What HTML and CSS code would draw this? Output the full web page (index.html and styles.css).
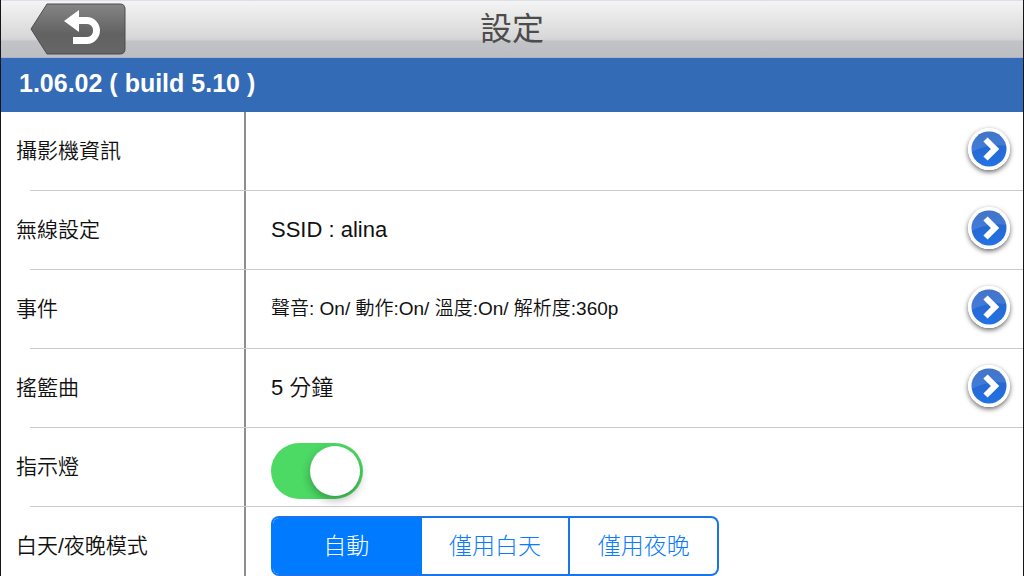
FILE: index.html
```
<!DOCTYPE html>
<html lang="zh-Hant">
<head>
  <meta charset="UTF-8" />
  <meta name="viewport" content="width=device-width, initial-scale=1.0" />
  <title>設定</title>
  <link rel="stylesheet" href="styles.css">
</head>
<body>
  <!-- shared arrow icon -->
  <svg class="sprite" aria-hidden="true">
    <defs>
      <linearGradient id="arrowFill" x1="0" y1="0" x2="0" y2="1">
        <stop offset="0" stop-color="#2a62c0" />
        <stop offset="1" stop-color="#2272e6" />
      </linearGradient>
      <symbol id="icon-arrow" viewBox="0 0 42 42">
        <circle cx="21" cy="21" r="21" fill="#fff" />
        <circle cx="21" cy="21" r="17.5" fill="url(#arrowFill)" />
        <path d="M4 24a17 17 0 0 1 34-6C28 16 14 18 4 24z" fill="#fff" opacity="0.12" />
        <path d="M17.5 11.500l9.500 9.500-9.500 9.500" fill="none" stroke="#fff" stroke-width="6" />
      </symbol>
    </defs>
  </svg>

  <header class="top-bar">
    <button type="button" class="back-btn" aria-label="返回">
      <svg width="96" height="52" viewBox="0 0 96 52">
        <defs>
          <linearGradient id="backFill" x1="0" y1="0" x2="0" y2="1">
            <stop offset="0" stop-color="#858585" />
            <stop offset="0.6" stop-color="#626262" />
            <stop offset="1" stop-color="#666" />
          </linearGradient>
        </defs>
        <path d="M17 1h73q5 0 5 5v40q0 5-5 5H17L1 26z" fill="url(#backFill)" stroke="#4d4d4d" stroke-linejoin="round" />
        <path d="M34 18L49 7v7h8c7 0 13 6 13 13.500s-6 13.500-13 13.500H43v-7h14c4 0 6-3 6-6.500s-2-6.500-6-6.500h-8v8z" fill="#fff" />
      </svg>
    </button>
    <h1>設定</h1>
  </header>

  <h2 class="version">1.06.02 ( build 5.10 )</h2>

  <main class="settings">
    <div class="row">
      <div class="name" id="cameraName">攝影機資訊</div>
      <div class="value">
        <button type="button" class="arrow-btn" aria-labelledby="cameraName"><svg><use href="#icon-arrow" /></svg></button>
      </div>
    </div>
    <hr>
    <div class="row">
      <div class="name" id="wifiName">無線設定</div>
      <div class="value">
        <span>SSID : alina</span>
        <button type="button" class="arrow-btn" aria-labelledby="wifiName"><svg><use href="#icon-arrow" /></svg></button>
      </div>
    </div>
    <hr>
    <div class="row">
      <div class="name" id="eventName">事件</div>
      <div class="value">
        <span class="small">聲音: On/ 動作:On/ 溫度:On/ 解析度:360p</span>
        <button type="button" class="arrow-btn" aria-labelledby="eventName"><svg><use href="#icon-arrow" /></svg></button>
      </div>
    </div>
    <hr>
    <div class="row">
      <div class="name" id="lullabyName">搖籃曲</div>
      <div class="value">
        <span>5 分鐘</span>
        <button type="button" class="arrow-btn" aria-labelledby="lullabyName"><svg><use href="#icon-arrow" /></svg></button>
      </div>
    </div>
    <hr>
    <div class="row">
      <label class="name" for="led">指示燈</label>
      <div class="value switch-cell">
        <input type="checkbox" class="switch" id="led" checked />
      </div>
    </div>
    <hr>
    <div class="row">
      <div class="name" id="modeName">白天/夜晚模式</div>
      <div class="value">
        <div class="segments" role="radiogroup" aria-labelledby="modeName">
          <label><input type="radio" name="mode" checked />自動</label>
          <label><input type="radio" name="mode" />僅用白天</label>
          <label><input type="radio" name="mode" />僅用夜晚</label>
        </div>
      </div>
    </div>
  </main>
</body>
</html>
```

FILE: styles.css
```
* {
  margin: 0;
  padding: 0;
  box-sizing: border-box;
}

body {
  height: 100vh;
  overflow: hidden;
  border: solid #15151c;
  border-width: 0 1px;
  background: #fff;
  color: #111;
  font-family: "Liberation Sans", "Noto Sans CJK TC", sans-serif;
  font-size: 22px;
  line-height: 28px;
}

button {
  border: none;
  background: none;
  cursor: pointer;
}

.sprite {
  display: block;
  width: 0;
  height: 0;
}

/* top bar */
.top-bar {
  display: grid;
  grid-template-columns: 1fr auto 1fr;
  align-items: center;
  height: 58px;
  padding: 0 29px;
  border-top: 1px solid #dde0e8;
  border-bottom: 1px solid #a9b4c8;
  background: linear-gradient(#f4f4f4, #d6d6d7 68%, #c2c3c6 72%, #bdbec2);
}

.back-btn {
  justify-self: start;
  height: 52px;
}

.back-btn svg {
  display: block;
}

.top-bar h1 {
  color: #4c4c4c;
  font-size: 32px;
  font-weight: normal;
  line-height: 48px;
}

/* version banner */
.version {
  height: 54px;
  padding: 0 18px;
  background: #336bb6;
  color: #fff;
  font-size: 25px;
  line-height: 50px;
}

/* settings list */
.settings hr {
  height: 1px;
  margin-left: 29px;
  border: none;
  background: #cbcbcd;
}

.row {
  display: flex;
  height: 78px;
}

.name {
  display: flex;
  align-items: center;
  width: 245px;
  padding-left: 15px;
  border-right: 2px solid #8e8e90;
  font-size: 21px;
  font-weight: 350;
}

.value {
  display: flex;
  flex: 1;
  align-items: center;
  padding: 0 13px 0 25px;
  font-weight: 350;
}

.value .small {
  font-size: 19px;
}

.arrow-btn {
  width: 42px;
  height: 42px;
  margin: 0 0 4px auto;
  border-radius: 50%;
  box-shadow: 0 2px 5px rgba(0, 0, 0, 0.6);
}

.arrow-btn svg {
  display: block;
  width: 42px;
  height: 42px;
}

/* on/off switch */
.switch-cell {
  padding-top: 8px;
}

.switch {
  display: flex;
  align-items: center;
  width: 92px;
  height: 56px;
  padding: 3px;
  border-radius: 28px;
  background: #e5e5e5;
  appearance: none;
  cursor: pointer;
}

.switch::before {
  content: "";
  width: 50px;
  height: 50px;
  border-radius: 50%;
  background: #fff;
  box-shadow: 0 4px 10px rgba(0, 0, 0, 0.3);
}

.switch:checked {
  justify-content: flex-end;
  background: #4cd964;
}

/* segmented control */
.segments {
  display: flex;
  width: 448px;
  height: 60px;
  overflow: hidden;
  border: 2px solid #1a75ea;
  border-radius: 8px;
  color: #0a7aff;
  font-size: 23px;
  font-weight: 300;
}

.segments:has(label:first-child input:checked) {
  border-left-color: #007aff;
}

.segments label {
  display: flex;
  flex: 1;
  align-items: center;
  justify-content: center;
  cursor: pointer;
}

.segments label + label {
  border-left: 2px solid #1a75ea;
}

.segments input {
  width: 0;
  height: 0;
  appearance: none;
}

.segments label:has(input:checked) {
  background: #007aff;
  color: #fff;
}

.segments label:has(input:checked) + label {
  border-left-color: #007aff;
}
```
